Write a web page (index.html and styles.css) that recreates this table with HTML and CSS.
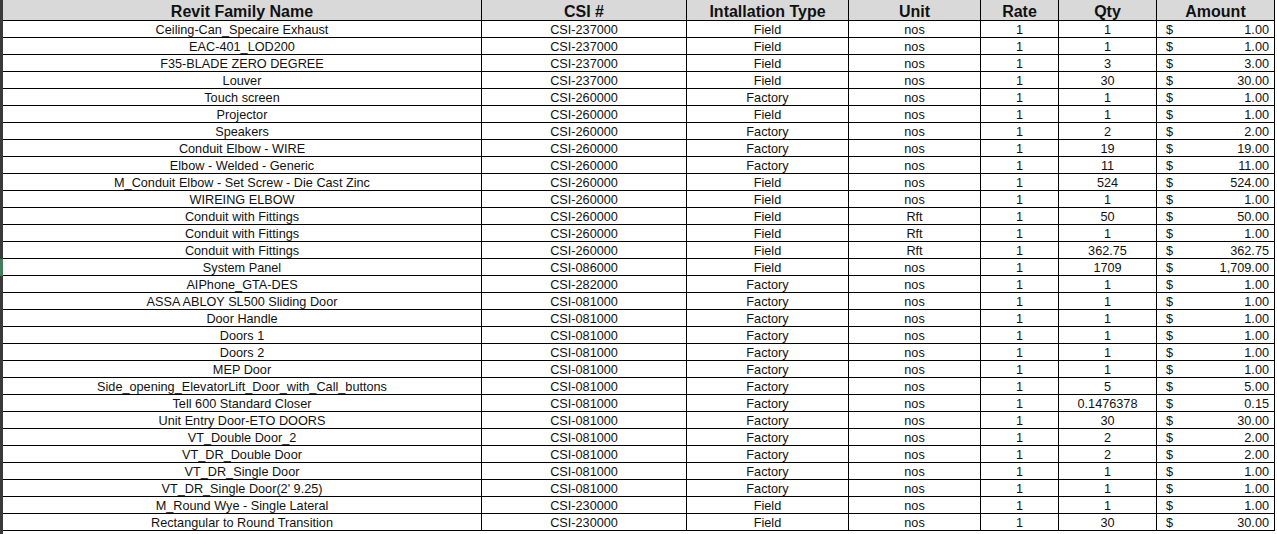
FILE: index.html
```html
<!DOCTYPE html>
<html>
<head>
<meta charset="utf-8">
<link rel="stylesheet" href="styles.css">
</head>
<body>
<div class="page">
  <div class="gutter">
    <div class="g-dark g-top"></div>
    <div class="g-mark"></div>
    <div class="g-dark g-rest"></div>
  </div>
  <div class="sheet">
    <div class="row head">
      <div class="c">Revit Family Name</div>
      <div class="c">CSI #</div>
      <div class="c">Intallation Type</div>
      <div class="c">Unit</div>
      <div class="c">Rate</div>
      <div class="c">Qty</div>
      <div class="c">Amount</div>
    </div>
    <div class="row"><div class="c">Ceiling-Can_Specaire Exhaust</div><div class="c">CSI-237000</div><div class="c">Field</div><div class="c">nos</div><div class="c">1</div><div class="c">1</div><div class="c amt"><span>$</span><span>1.00</span></div></div>
    <div class="row"><div class="c">EAC-401_LOD200</div><div class="c">CSI-237000</div><div class="c">Field</div><div class="c">nos</div><div class="c">1</div><div class="c">1</div><div class="c amt"><span>$</span><span>1.00</span></div></div>
    <div class="row"><div class="c">F35-BLADE ZERO DEGREE</div><div class="c">CSI-237000</div><div class="c">Field</div><div class="c">nos</div><div class="c">1</div><div class="c">3</div><div class="c amt"><span>$</span><span>3.00</span></div></div>
    <div class="row"><div class="c">Louver</div><div class="c">CSI-237000</div><div class="c">Field</div><div class="c">nos</div><div class="c">1</div><div class="c">30</div><div class="c amt"><span>$</span><span>30.00</span></div></div>
    <div class="row"><div class="c">Touch screen</div><div class="c">CSI-260000</div><div class="c">Factory</div><div class="c">nos</div><div class="c">1</div><div class="c">1</div><div class="c amt"><span>$</span><span>1.00</span></div></div>
    <div class="row"><div class="c">Projector</div><div class="c">CSI-260000</div><div class="c">Field</div><div class="c">nos</div><div class="c">1</div><div class="c">1</div><div class="c amt"><span>$</span><span>1.00</span></div></div>
    <div class="row"><div class="c">Speakers</div><div class="c">CSI-260000</div><div class="c">Factory</div><div class="c">nos</div><div class="c">1</div><div class="c">2</div><div class="c amt"><span>$</span><span>2.00</span></div></div>
    <div class="row"><div class="c">Conduit Elbow - WIRE</div><div class="c">CSI-260000</div><div class="c">Factory</div><div class="c">nos</div><div class="c">1</div><div class="c">19</div><div class="c amt"><span>$</span><span>19.00</span></div></div>
    <div class="row"><div class="c">Elbow - Welded - Generic</div><div class="c">CSI-260000</div><div class="c">Factory</div><div class="c">nos</div><div class="c">1</div><div class="c">11</div><div class="c amt"><span>$</span><span>11.00</span></div></div>
    <div class="row"><div class="c">M_Conduit Elbow - Set Screw - Die Cast Zinc</div><div class="c">CSI-260000</div><div class="c">Field</div><div class="c">nos</div><div class="c">1</div><div class="c">524</div><div class="c amt"><span>$</span><span>524.00</span></div></div>
    <div class="row"><div class="c">WIREING ELBOW</div><div class="c">CSI-260000</div><div class="c">Field</div><div class="c">nos</div><div class="c">1</div><div class="c">1</div><div class="c amt"><span>$</span><span>1.00</span></div></div>
    <div class="row"><div class="c">Conduit with Fittings</div><div class="c">CSI-260000</div><div class="c">Field</div><div class="c">Rft</div><div class="c">1</div><div class="c">50</div><div class="c amt"><span>$</span><span>50.00</span></div></div>
    <div class="row"><div class="c">Conduit with Fittings</div><div class="c">CSI-260000</div><div class="c">Field</div><div class="c">Rft</div><div class="c">1</div><div class="c">1</div><div class="c amt"><span>$</span><span>1.00</span></div></div>
    <div class="row"><div class="c">Conduit with Fittings</div><div class="c">CSI-260000</div><div class="c">Field</div><div class="c">Rft</div><div class="c">1</div><div class="c">362.75</div><div class="c amt"><span>$</span><span>362.75</span></div></div>
    <div class="row"><div class="c">System Panel</div><div class="c">CSI-086000</div><div class="c">Field</div><div class="c">nos</div><div class="c">1</div><div class="c">1709</div><div class="c amt"><span>$</span><span>1,709.00</span></div></div>
    <div class="row"><div class="c">AIPhone_GTA-DES</div><div class="c">CSI-282000</div><div class="c">Factory</div><div class="c">nos</div><div class="c">1</div><div class="c">1</div><div class="c amt"><span>$</span><span>1.00</span></div></div>
    <div class="row"><div class="c">ASSA ABLOY SL500 Sliding Door</div><div class="c">CSI-081000</div><div class="c">Factory</div><div class="c">nos</div><div class="c">1</div><div class="c">1</div><div class="c amt"><span>$</span><span>1.00</span></div></div>
    <div class="row"><div class="c">Door Handle</div><div class="c">CSI-081000</div><div class="c">Factory</div><div class="c">nos</div><div class="c">1</div><div class="c">1</div><div class="c amt"><span>$</span><span>1.00</span></div></div>
    <div class="row"><div class="c">Doors 1</div><div class="c">CSI-081000</div><div class="c">Factory</div><div class="c">nos</div><div class="c">1</div><div class="c">1</div><div class="c amt"><span>$</span><span>1.00</span></div></div>
    <div class="row"><div class="c">Doors 2</div><div class="c">CSI-081000</div><div class="c">Factory</div><div class="c">nos</div><div class="c">1</div><div class="c">1</div><div class="c amt"><span>$</span><span>1.00</span></div></div>
    <div class="row"><div class="c">MEP Door</div><div class="c">CSI-081000</div><div class="c">Factory</div><div class="c">nos</div><div class="c">1</div><div class="c">1</div><div class="c amt"><span>$</span><span>1.00</span></div></div>
    <div class="row"><div class="c">Side_opening_ElevatorLift_Door_with_Call_buttons</div><div class="c">CSI-081000</div><div class="c">Factory</div><div class="c">nos</div><div class="c">1</div><div class="c">5</div><div class="c amt"><span>$</span><span>5.00</span></div></div>
    <div class="row"><div class="c">Tell 600 Standard Closer</div><div class="c">CSI-081000</div><div class="c">Factory</div><div class="c">nos</div><div class="c">1</div><div class="c">0.1476378</div><div class="c amt"><span>$</span><span>0.15</span></div></div>
    <div class="row"><div class="c">Unit Entry Door-ETO DOORS</div><div class="c">CSI-081000</div><div class="c">Factory</div><div class="c">nos</div><div class="c">1</div><div class="c">30</div><div class="c amt"><span>$</span><span>30.00</span></div></div>
    <div class="row"><div class="c">VT_Double Door_2</div><div class="c">CSI-081000</div><div class="c">Factory</div><div class="c">nos</div><div class="c">1</div><div class="c">2</div><div class="c amt"><span>$</span><span>2.00</span></div></div>
    <div class="row"><div class="c">VT_DR_Double Door</div><div class="c">CSI-081000</div><div class="c">Factory</div><div class="c">nos</div><div class="c">1</div><div class="c">2</div><div class="c amt"><span>$</span><span>2.00</span></div></div>
    <div class="row"><div class="c">VT_DR_Single Door</div><div class="c">CSI-081000</div><div class="c">Factory</div><div class="c">nos</div><div class="c">1</div><div class="c">1</div><div class="c amt"><span>$</span><span>1.00</span></div></div>
    <div class="row"><div class="c">VT_DR_Single Door(2' 9.25)</div><div class="c">CSI-081000</div><div class="c">Factory</div><div class="c">nos</div><div class="c">1</div><div class="c">1</div><div class="c amt"><span>$</span><span>1.00</span></div></div>
    <div class="row"><div class="c">M_Round Wye - Single Lateral</div><div class="c">CSI-230000</div><div class="c">Field</div><div class="c">nos</div><div class="c">1</div><div class="c">1</div><div class="c amt"><span>$</span><span>1.00</span></div></div>
    <div class="row"><div class="c">Rectangular to Round Transition</div><div class="c">CSI-230000</div><div class="c">Field</div><div class="c">nos</div><div class="c">1</div><div class="c">30</div><div class="c amt"><span>$</span><span>30.00</span></div></div>
  </div>
</div>
</body>
</html>
```

FILE: styles.css
```css
html, body {
  margin: 0;
  padding: 0;
  background: #ffffff;
}
body {
  font-family: "Liberation Sans", Arial, sans-serif;
  color: #111111;
  overflow: hidden;
}
.page {
  display: flex;
  height: 534px;
}
.gutter {
  width: 3px;
  display: flex;
  flex-direction: column;
  flex: none;
}
.g-dark {
  background: #3a3a3a;
}
.g-top {
  height: 259px;
}
.g-mark {
  height: 17px;
  background: #3f7f5a;
}
.g-rest {
  flex: 1;
}
.sheet {
  width: 1272px;
  display: flex;
  flex-direction: column;
  flex: none;
}
.row {
  display: grid;
  grid-template-columns: 479px 205px 162px 132px 78px 98px 118px;
  height: 17px;
  box-sizing: border-box;
  border-bottom: 1px solid #000;
  font-size: 12.7px;
  line-height: 15px;
}
.row.head {
  height: 21px;
  background: #d9d9d9;
  font-size: 16px;
  font-weight: bold;
  line-height: 19px;
}
.c {
  box-sizing: border-box;
  border-right: 1px solid #000;
  padding-top: 2px;
  text-align: center;
  white-space: nowrap;
  overflow: hidden;
}
.amt {
  display: flex;
  justify-content: space-between;
  padding: 2px 5px 0 9px;
}
```
